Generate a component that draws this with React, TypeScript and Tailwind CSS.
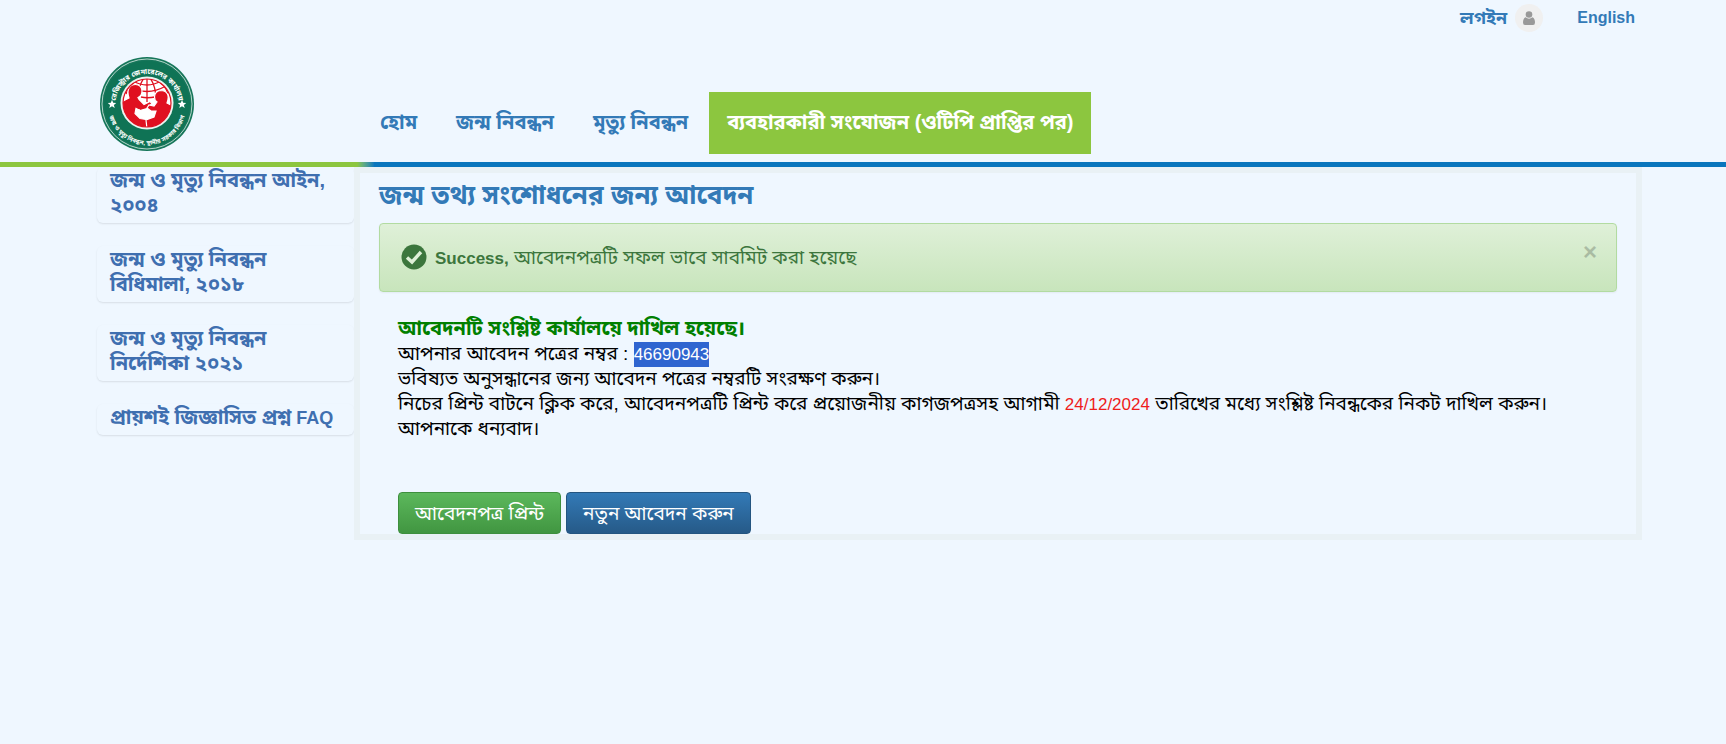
import React from "react";

const NAV = ["হোম", "জন্ম নিবন্ধন", "মৃত্যু নিবন্ধন"];

const SIDE_LINKS = [
  { text: "জন্ম ও মৃত্যু নিবন্ধন আইন, ২০০৪" },
  { text: "জন্ম ও মৃত্যু নিবন্ধন বিধিমালা, ২০১৮" },
  { text: "জন্ম ও মৃত্যু নিবন্ধন নির্দেশিকা ২০২১" },
  { text: "প্রায়শই জিজ্ঞাসিত প্রশ্ন", latin: "FAQ" },
];

function Logo() {
  return (
    <svg viewBox="0 0 96 96" className="size-24" role="img" aria-label="রেজিস্ট্রার জেনারেলের কার্যালয়">
      <defs>
        <path id="arc-top" d="M16 50a32 32 0 0 1 64 0" />
        <path id="arc-bottom" d="M9 50a39 39 0 0 0 78 0" />
        <clipPath id="disc">
          <circle cx="48" cy="47" r="24" />
        </clipPath>
      </defs>
      <circle cx="48" cy="48" r="47" fill="#16765a" />
      <circle cx="48" cy="48" r="45" fill="none" stroke="#b5d6ca" strokeWidth="1" />
      <circle cx="48" cy="48" r="43" fill="#0f7355" />
      <circle cx="48" cy="47" r="26.500" fill="#e9f4f0" />
      <g clipPath="url(#disc)">
        <circle cx="48" cy="47" r="24" fill="#fff" />
        <g fill="none" stroke="#e01020" strokeWidth="1.300">
          <path d="M34 25q7 4 14 4t14-4M29 30q10 5.500 19 5.500t19-5.500M42 41q6 1.500 14 0" />
          <path d="M48 22v24M45 22q-6 8-6 22M51 22q6 8 6 22M40 23q-10 5-13 15M56 23q10 5 13 15" />
        </g>
        <g fill="#e01020" stroke="#fff" strokeWidth="1.200">
          <path d="M36.500 28.500c4 0 6.500 3 6.500 6.500 0 3-1.500 5.500-4 6.500l1 2 5 5 6-3 2 2-5 5-7 2-4-2-1 5 5 5 12 2v8H20V47l10-5c-3-9 1-13.500 6.500-13.500z" />
          <path d="M62 34.500c-4 0-6.500 3-6.500 6.500 0 2.500 1 4 2.500 5l-3 4-5-1-2 3 4 3 5 0-2 6-8 3 1 9h26V50l-6-3c3-8 0-12.500-6.500-12.500z" />
        </g>
        <path d="M38 54l3 5 9 3 4-4-3-2-6 1-5-4z" fill="#fff" />
      </g>
      <circle cx="48" cy="47" r="24" fill="none" stroke="#e01020" strokeWidth="1.200" />
      <path d="M13 43.800l1.200 2.900 3 .2-2.300 2 .8 3-2.700-1.600-2.700 1.600.8-3-2.300-2 3-.2zM83 43.800l1.200 2.900 3 .2-2.300 2 .8 3-2.700-1.600-2.700 1.600.8-3-2.300-2 3-.2z" fill="#fff" />
      <g className="fill-white font-bold" textAnchor="middle">
        <text fontSize="7"><textPath href="#arc-top" startOffset="50%">রেজিস্ট্রার জেনারেলের কার্যালয়</textPath></text>
        <text fontSize="6"><textPath href="#arc-bottom" startOffset="50%">জন্ম ও মৃত্যু নিবন্ধন, স্থানীয় সরকার বিভাগ</textPath></text>
      </g>
    </svg>
  );
}

export default function App() {
  return (
    <div className="min-h-screen bg-[#eff7ff] font-['Liberation_Sans','Noto_Sans_Bengali',sans-serif] text-[19px] leading-[25px] text-black">
      <header>
        <div className="flex h-9 items-center justify-end pr-[91px] text-base font-bold text-[#337ab7]">
          <a href="#login" className="flex items-center gap-2 text-lg">
            লগইন
            <span className="flex size-7 items-center justify-center rounded-full bg-[#f0f0f0]">
              <svg viewBox="0 0 12 14" className="h-3.5 w-3 fill-[#999]" aria-hidden="true">
                <circle cx="6" cy="3.500" r="3.300" />
                <path d="M2.500 6.300Q6 9 9.500 6.300 12 7.500 12 11.500 12 14 10 14H2Q0 14 0 11.500 0 7.500 2.500 6.300z" />
              </svg>
            </span>
          </a>
          <a href="#english" className="ml-[34px]">English</a>
        </div>
        <div className="flex h-[126px] items-start pl-[99px]">
          <a href="#home" className="mt-5"><Logo /></a>
          <nav className="ml-[167px] mt-14 flex gap-[3px] text-xl font-bold text-[#337ab7]">
            {NAV.map((item) => (
              <a key={item} href="#nav" className="flex h-[62px] items-center px-[18px] pb-0.5">{item}</a>
            ))}
            <a href="#otp" className="flex h-[62px] items-center bg-[#8cc63f] px-[18px] pb-0.5 text-white">
              ব্যবহারকারী সংযোজন (ওটিপি প্রাপ্তির পর)
            </a>
          </nav>
        </div>
        <div className="h-[5px] bg-linear-to-r from-[#8cc63f] from-[20.7%] to-[#0a76bd] to-[21.7%]" />
      </header>

      <div className="flex items-start pl-[97px] pr-[84px]">
        <aside className="flex w-[257px] shrink-0 flex-col gap-[23px]">
          {SIDE_LINKS.map(({ text, latin }) => (
            <a key={text} href="#doc" className="rounded-md px-[13px] pt-px pb-[5px] text-xl leading-[25px] font-bold text-[#3f6fb0] shadow-[0_1px_2px_rgba(0,0,0,0.1)]">
              {text}{latin && <span className="text-lg leading-none"> {latin}</span>}
            </a>
          ))}
        </aside>

        <main className="min-w-0 flex-1 border-6 border-[#e9f1f5] px-[19px]">
          <h1 className="pt-[5px] pb-[11px] text-[26px] leading-[34px] font-bold text-[#337ab7]">জন্ম তথ্য সংশোধনের জন্য আবেদন</h1>
          <div role="alert" className="flex h-[69px] items-start justify-between rounded border border-[#b2dba1] bg-linear-to-b from-[#dff0d8] to-[#c8e5bc] px-[19px] pt-5 text-[#3c763d] shadow-[0_1px_2px_rgba(0,0,0,0.05)]">
            <p className="flex items-center gap-2 pl-0.5">
              <svg viewBox="0 0 26 26" className="size-[26px]" aria-hidden="true">
                <circle cx="13" cy="13" r="12.500" fill="#3c763d" />
                <path d="M6 13.500l5 4.500 9-10" fill="none" stroke="#dff0d8" strokeWidth="3.400" />
              </svg>
              <span><strong className="text-[17px] leading-none">Success,</strong> আবেদনপত্রটি সফল ভাবে সাবমিট করা হয়েছে</span>
            </p>
            <button type="button" aria-label="Close" className="text-2xl leading-4 font-bold text-black opacity-20">×</button>
          </div>
          <div className="px-[19px] pt-6">
            <p className="text-xl leading-[25px] font-bold text-[#008000]">আবেদনটি সংশ্লিষ্ট কার্যালয়ে দাখিল হয়েছে।</p>
            <p>আপনার আবেদন পত্রের নম্বর : <span className="bg-[#2f65d0] py-[3px] text-[17px] leading-none text-white">46690943</span></p>
            <p>ভবিষ্যত অনুসন্ধানের জন্য আবেদন পত্রের নম্বরটি সংরক্ষণ করুন।</p>
            <p>
              নিচের প্রিন্ট বাটনে ক্লিক করে, আবেদনপত্রটি প্রিন্ট করে প্রয়োজনীয় কাগজপত্রসহ আগামী <span className="text-[17px] leading-none text-[#ee1c1c]">24/12/2024</span> তারিখের মধ্যে সংশ্লিষ্ট নিবন্ধকের নিকট দাখিল করুন।
            </p>
            <p>আপনাকে ধন্যবাদ।</p>
            <div className="mt-[51px] flex gap-[5px] text-white">
              <button type="button" className="h-[42px] rounded border border-[#3e8f3e] bg-linear-to-b from-[#5cb85c] to-[#419641] px-4">আবেদনপত্র প্রিন্ট</button>
              <button type="button" className="h-[42px] rounded border border-[#245580] bg-linear-to-b from-[#337ab7] to-[#265a88] px-4">নতুন আবেদন করুন</button>
            </div>
          </div>
        </main>
      </div>
    </div>
  );
}
